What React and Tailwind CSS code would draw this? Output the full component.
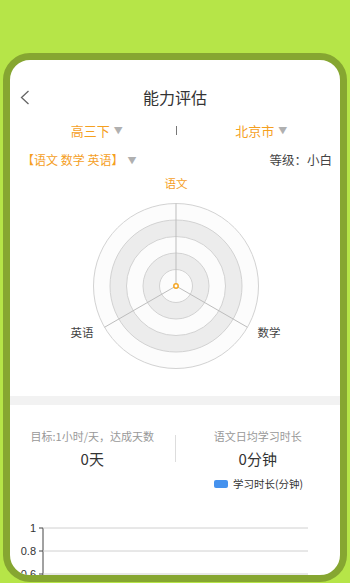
import React from "react";

const FONT = { fontFamily: '"Noto Sans CJK SC", "Noto Sans", sans-serif' };

function Tri() {
  return <span className="text-[9px] text-[#b0b0b0] ml-[4px] leading-none">▼</span>;
}

function Radar() {
  const cx = 166;
  const cy = 111;
  const rings = [82.5, 66, 49.5, 33, 16.5];
  const fills = ["#fcfcfc", "#ececec", "#fcfcfc", "#ececec", "#fcfcfc"];
  const r = 82.5;
  const dx = r * Math.cos(Math.PI / 6);
  const dy = r * Math.sin(Math.PI / 6);
  return (
    <svg width="330" height="220" viewBox="0 0 330 220" className="block">
      {rings.map((rr, i) => (
        <circle key={i} cx={cx} cy={cy} r={rr} fill={fills[i]} stroke="#d2d2d2" strokeWidth="1" />
      ))}
      <line x1={cx} y1={cy} x2={cx} y2={cy - r} stroke="#bdbdbd" strokeWidth="1" />
      <line x1={cx} y1={cy} x2={cx + dx} y2={cy + dy} stroke="#bdbdbd" strokeWidth="1" />
      <line x1={cx} y1={cy} x2={cx - dx} y2={cy + dy} stroke="#bdbdbd" strokeWidth="1" />
      <circle cx={cx} cy={cy} r="2.2" fill="#fff" stroke="#f5a623" strokeWidth="1.5" />
      <text x={cx} y="13" textAnchor="middle" fontSize="11.5" fill="#f5a01f" style={FONT}>语文</text>
      <text x="259" y="162" textAnchor="middle" fontSize="11.5" fill="#444" style={FONT}>数学</text>
      <text x="72" y="162" textAnchor="middle" fontSize="11.5" fill="#444" style={FONT}>英语</text>
    </svg>
  );
}

function Chart() {
  return (
    <svg width="330" height="62" viewBox="0 0 330 62" className="block">
      <line x1="33" y1="12" x2="33" y2="62" stroke="#444" strokeWidth="1" />
      {[12, 35, 58].map((y, i) => (
        <g key={i}>
          <line x1="33" y1={y} x2="298" y2={y} stroke="#d0d0d0" strokeWidth="1" />
          <line x1="29" y1={y} x2="33" y2={y} stroke="#444" strokeWidth="1" />
        </g>
      ))}
      <text x="26" y="16" textAnchor="end" fontSize="11" fill="#333" style={{ fontFamily: '"Liberation Sans", sans-serif' }}>1</text>
      <text x="26" y="39" textAnchor="end" fontSize="11" fill="#333" style={{ fontFamily: '"Liberation Sans", sans-serif' }}>0.8</text>
      <text x="26" y="62" textAnchor="end" fontSize="11" fill="#333" style={{ fontFamily: '"Liberation Sans", sans-serif' }}>0.6</text>
    </svg>
  );
}

export default function App() {
  return (
    <div className="w-[350px] h-[583px] bg-[#b6e548] overflow-hidden pt-[53px] px-[3px]" style={FONT}>
      <div className="h-[529px] border-[7px] border-[#86a631] rounded-[27px] bg-white overflow-hidden flex flex-col *:shrink-0">
        {/* header */}
        <div className="mt-[20px] h-[34px] grid grid-cols-[1fr_auto_1fr] items-center px-[10px]">
          <svg width="10" height="15" viewBox="0 0 10 15">
            <polyline points="8.5,1 1.5,7.5 8.5,14" fill="none" stroke="#666" strokeWidth="1.3" />
          </svg>
          <div className="text-[16px] text-[#333] leading-none">能力评估</div>
          <div />
        </div>
        {/* row 1 */}
        <div className="mt-[6px] h-[20px] flex items-center">
          <div className="flex-1 flex justify-center items-center pl-[8px]">
            <span className="text-[13px] text-[#f5a01f] leading-none">高三下</span>
            <Tri />
          </div>
          <div className="w-[1px] h-[9px] bg-[#777]" />
          <div className="flex-1 flex justify-center items-center pl-[6px]">
            <span className="text-[13px] text-[#f5a01f] leading-none">北京市</span>
            <Tri />
          </div>
        </div>
        {/* row 2 */}
        <div className="mt-[10px] h-[20px] flex items-center justify-between pl-[12px] pr-[8px]">
          <div className="flex items-center">
            <span className="text-[12px] text-[#f5a01f] leading-none">【语文 数学 英语】</span>
            <Tri />
          </div>
          <span className="text-[12.5px] text-[#444] leading-none">等级：小白</span>
        </div>
        {/* radar */}
        <div className="mt-[5px]">
          <Radar />
        </div>
        {/* divider band */}
        <div className="mt-[1px] h-[9px] bg-[#f2f2f2]" />
        {/* stats */}
        <div className="mt-[26px] flex items-center">
          <div className="flex-1 flex flex-col items-center">
            <span className="text-[11px] text-[#999] leading-none">目标:1小时/天，达成天数</span>
            <span className="mt-[9px] text-[15px] text-[#333] leading-none">0天</span>
          </div>
          <div className="w-[1px] h-[27px] bg-[#ddd]" />
          <div className="flex-1 flex flex-col items-center">
            <span className="text-[11px] text-[#999] leading-none">语文日均学习时长</span>
            <span className="mt-[9px] text-[15px] text-[#333] leading-none">0分钟</span>
          </div>
        </div>
        {/* legend */}
        <div className="mt-[13px] flex items-center pl-[204px]">
          <div className="w-[14px] h-[8px] rounded-[2px] bg-[#4592ee]" />
          <span className="ml-[5px] text-[10.5px] text-[#333] leading-none">学习时长(分钟)</span>
        </div>
        {/* chart */}
        <div className="mt-[26px]">
          <Chart />
        </div>
      </div>
    </div>
  );
}
